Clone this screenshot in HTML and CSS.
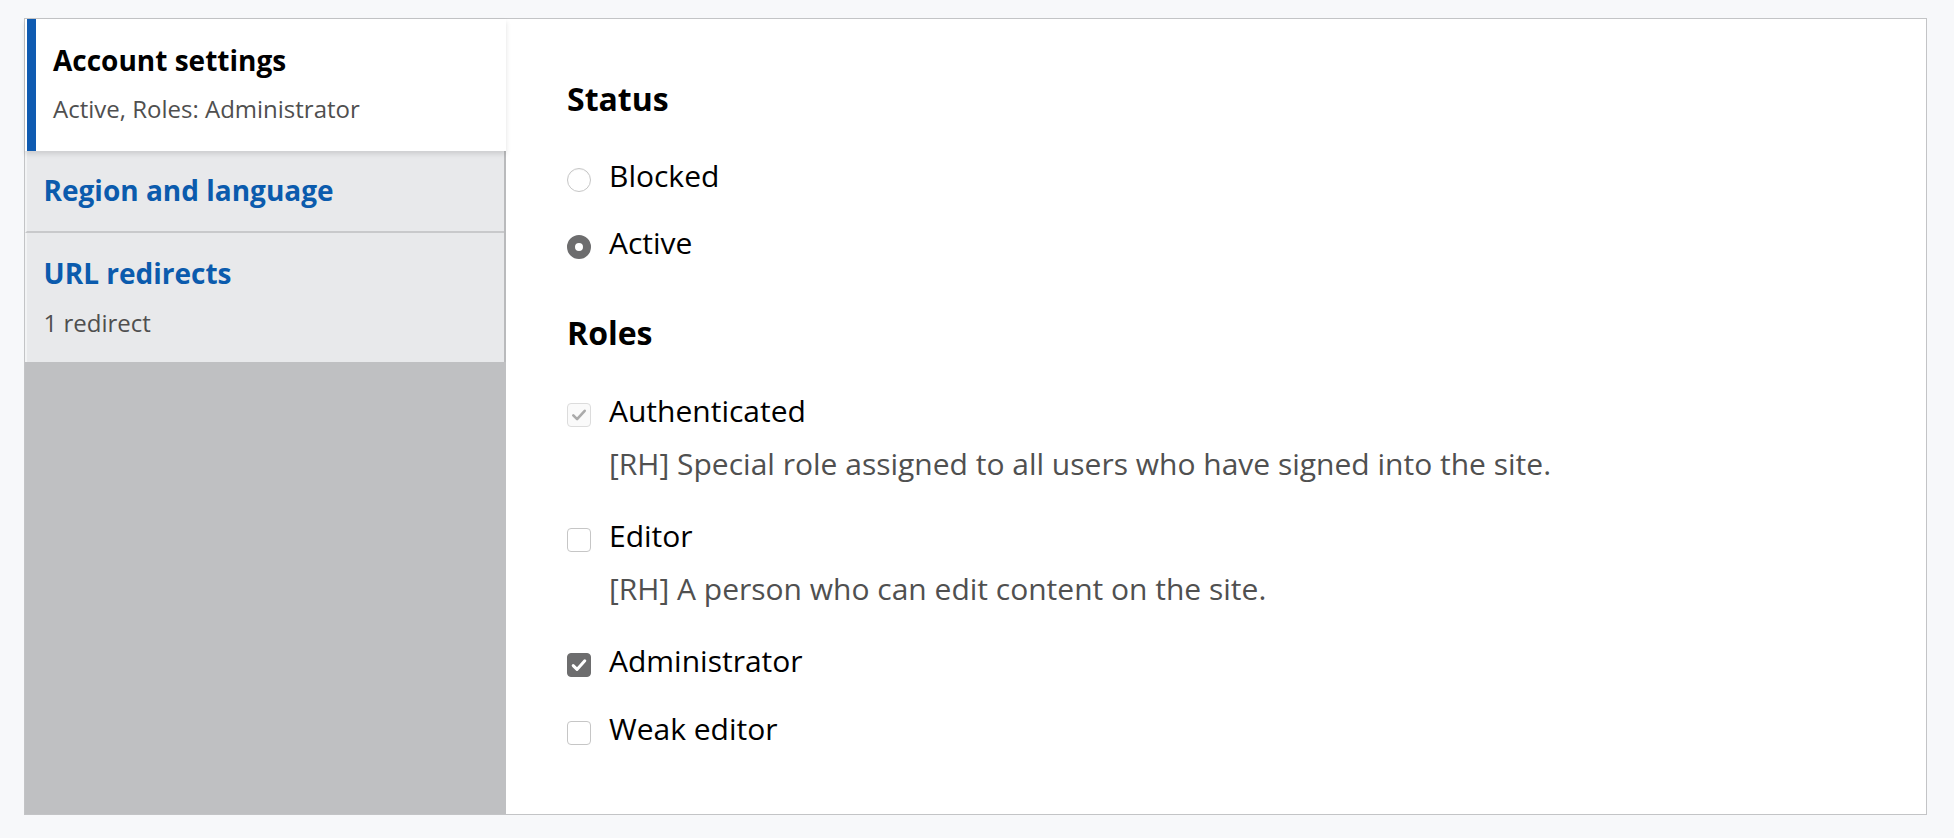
FILE: index.html
```
<!DOCTYPE html>
<html lang="en">
<head>
<meta charset="utf-8">
<title>Account settings</title>
<link rel="stylesheet" href="styles.css">
</head>
<body>
<div class="panel">
  <nav class="tabs">
    <ul class="tab-list">
      <li class="tab is-selected">
        <span class="tab-title">Account settings</span>
        <span class="tab-summary">Active, Roles: Administrator</span>
      </li>
      <li class="tab tab-plain">
        <a class="tab-title tab-link" href="#">Region and language</a>
      </li>
      <li class="tab tab-last">
        <a class="tab-title tab-link" href="#">URL redirects</a>
        <span class="tab-summary">1 redirect</span>
      </li>
    </ul>
    <div class="tab-filler"></div>
  </nav>
  <main class="main">
    <h2 class="heading">Status</h2>
    <div class="options options-status">
      <div class="item">
        <span class="radio"></span>
        <div class="item-text"><span class="label">Blocked</span></div>
      </div>
      <div class="item">
        <span class="radio radio-checked"></span>
        <div class="item-text"><span class="label">Active</span></div>
      </div>
    </div>
    <h2 class="heading heading-roles">Roles</h2>
    <div class="options options-roles">
      <div class="item">
        <span class="checkbox checkbox-disabled">
          <svg viewBox="0 0 24 24" width="24" height="24"><path d="M6.3 12.4l3.8 3.8 7.6-8.4" fill="none" stroke="#ababab" stroke-width="2.6" stroke-linecap="round" stroke-linejoin="round"/></svg>
        </span>
        <div class="item-text">
          <span class="label">Authenticated</span>
          <span class="description">[RH] Special role assigned to all users who have signed into the site.</span>
        </div>
      </div>
      <div class="item item-after-desc">
        <span class="checkbox"></span>
        <div class="item-text">
          <span class="label">Editor</span>
          <span class="description">[RH] A person who can edit content on the site.</span>
        </div>
      </div>
      <div class="item item-after-desc">
        <span class="checkbox checkbox-checked">
          <svg viewBox="0 0 24 24" width="24" height="24"><path d="M6.2 12.6l3.8 3.8 7.8-8.6" fill="none" stroke="#ffffff" stroke-width="3" stroke-linecap="round" stroke-linejoin="round"/></svg>
        </span>
        <div class="item-text"><span class="label">Administrator</span></div>
      </div>
      <div class="item">
        <span class="checkbox"></span>
        <div class="item-text"><span class="label">Weak editor</span></div>
      </div>
    </div>
  </main>
</div>
</body>
</html>
```
FILE: styles.css
```
* {
  box-sizing: border-box;
}

html, body {
  margin: 0;
  padding: 0;
  background: #f7f8fa;
}

body {
  font-family: "Open Sans", "Noto Sans", "DejaVu Sans", sans-serif;
  color: #000;
}

.panel {
  margin: 18px 0 0 24px;
  width: 1903px;
  height: 797px;
  border: 1px solid #c3c4c6;
  background: #fff;
  display: flex;
}

.tabs {
  width: 481px;
  flex: 0 0 481px;
  display: flex;
  flex-direction: column;
  background: #bfc0c2;
  position: relative;
  z-index: 1;
}

.tab-list {
  list-style: none;
  margin: 0;
  padding: 0;
  border-right: 2px solid #b9babc;
  background: #e8e9eb;
}

.tab {
  display: flex;
  flex-direction: column;
  border-left: 2px solid #f2f3f4;
  padding: 21px 16px 24px 16.5px;
  background: #e8e9eb;
}

.tab-plain {
  padding-bottom: 23px;
  border-bottom: 2px solid #c8c9cb;
}

.tab-last {
  padding-top: 22px;
  padding-bottom: 23px;
}

.tab.is-selected {
  background: #fff;
  border-left: 2px solid #fff;
  box-shadow: inset 9px 0 0 #0f5bb1, 0 3px 5px rgba(0, 0, 0, 0.12);
  margin-right: -2px;
  padding: 23px 16px 26px 26px;
  position: relative;
  z-index: 2;
}

.tab-title {
  font-size: 28px;
  line-height: 36px;
  font-weight: 700;
  color: #000;
}

.tab-link {
  color: #0b5bad;
  text-decoration: none;
}

.tab-summary {
  font-size: 24px;
  line-height: 32px;
  color: #4f4f4f;
  margin-top: 15px;
}

.tab .tab-link + .tab-summary {
  margin-top: 16px;
}

.tab-filler {
  flex: 1;
  background: #bfc0c2;
}

.main {
  flex: 1;
  padding: 60px 40px 0 61px;
}

.heading {
  margin: 0;
  font-size: 32px;
  line-height: 40px;
  font-weight: 700;
  color: #000;
}

.heading-roles {
  margin-top: 50px;
}

.options {
  display: flex;
  flex-direction: column;
}

.options-status {
  margin-top: 37px;
  gap: 27px;
}

.options-roles {
  margin-top: 38px;
  gap: 28px;
}

.item {
  display: flex;
  align-items: flex-start;
  gap: 18px;
}

.item-after-desc {
  margin-top: 4px;
}

.item-text {
  display: flex;
  flex-direction: column;
}

.label {
  font-size: 30px;
  line-height: 40px;
  color: #000;
}

.description {
  font-size: 30px;
  line-height: 40px;
  color: #505050;
  margin-top: 13px;
}

.radio {
  flex: 0 0 24px;
  width: 24px;
  height: 24px;
  margin-top: 12px;
  border-radius: 50%;
  border: 1px solid #c6c6c6;
  background: #fff;
  box-shadow: inset 0 1px 1px rgba(0, 0, 0, 0.04);
}

.radio-checked {
  border: 8px solid #6d6d6e;
  box-shadow: none;
}

.checkbox {
  flex: 0 0 24px;
  width: 24px;
  height: 24px;
  margin-top: 12px;
  border-radius: 4px;
  border: 1px solid #c6c6c6;
  background: #fff;
  display: flex;
  align-items: center;
  justify-content: center;
  overflow: hidden;
}

.checkbox svg {
  display: block;
  flex: 0 0 24px;
}

.checkbox-disabled {
  border-color: #dcdcdc;
  background: #fafafa;
}

.checkbox-checked {
  border-color: #6d6d6e;
  background: #6d6d6e;
}
```
